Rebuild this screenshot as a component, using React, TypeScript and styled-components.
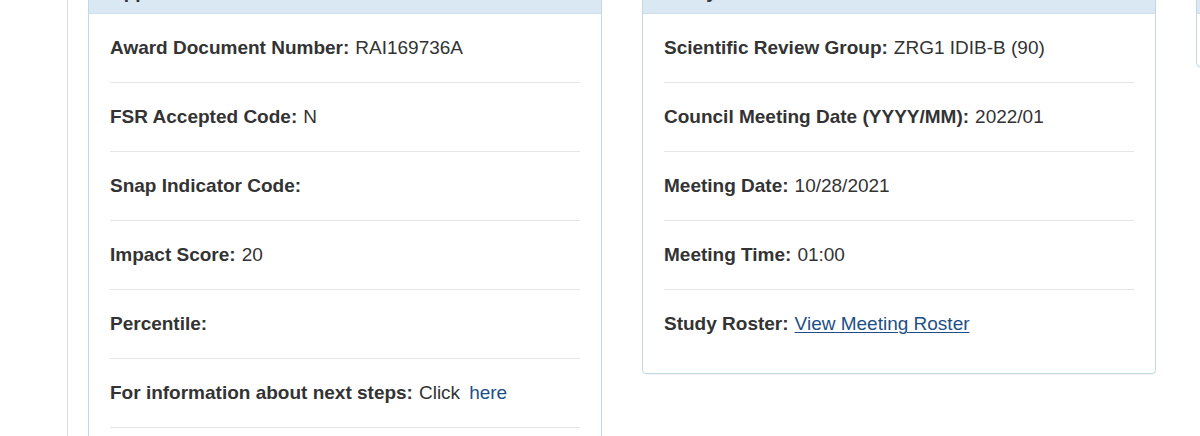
import React from "react";
import styled, { createGlobalStyle } from "styled-components";

const Global = createGlobalStyle`
  html, body { margin: 0; padding: 0; overflow: hidden; background: #fff; }
  body { font-family: "Liberation Sans", Arial, Helvetica, sans-serif; color: #333; }
`;

const Page = styled.div`
  margin-top: -30px;
  margin-left: 67px;
  border-left: 1px solid #dcdcdc;
  padding-left: 20px;
  min-height: 520px;
  display: flex;
  align-items: flex-start;
  gap: 40px;
`;

const Panel = styled.section<{ $tall?: boolean }>`
  flex: 0 0 514px;
  box-sizing: border-box;
  border: 1px solid #c3d8e5;
  border-radius: 4px;
  background: #fff;
  box-shadow: 0 1px 1px rgba(0, 0, 0, 0.04);
  padding-bottom: ${(p) => (p.$tall ? "40px" : "0")};
`;

const Header = styled.div`
  box-sizing: border-box;
  height: 43px;
  padding: 11px 21px 0;
  background: #d9e8f2;
  border-bottom: 1px solid #cfe0ea;
  font-size: 19px;
  line-height: 20px;
  font-weight: bold;
  color: #333;
  white-space: nowrap;
  overflow: hidden;
`;

const Body = styled.div<{ $pb?: number; $h?: number }>`
  padding: 0 21px ${(p) => p.$pb ?? 0}px;
  ${(p) => (p.$h ? `height: ${p.$h}px;` : "")}
`;

const Row = styled.div<{ $last?: boolean }>`
  height: 68px;
  display: flex;
  align-items: center;
  font-size: 19px;
  line-height: 22px;
  border-bottom: ${(p) => (p.$last ? "none" : "1px solid #e6e6e6")};
  white-space: nowrap;
`;

const Label = styled.strong`
  font-weight: bold;
  color: #333;
  margin-right: 6px;
`;

const Value = styled.span`
  color: #333;
`;

const Link = styled.a<{ $underline?: boolean }>`
  color: #1d4f86;
  text-decoration: ${(p) => (p.$underline ? "underline" : "none")};
  text-underline-offset: 2px;
  text-decoration-thickness: 1px;
  margin-left: ${(p) => (p.$underline ? "0" : "9px")};
`;

export default function App() {
  return (
    <>
      <Global />
      <Page>
        <Panel $tall>
          <Header>Application Information</Header>
          <Body>
            <Row>
              <Label>Award Document Number:</Label>
              <Value>RAI169736A</Value>
            </Row>
            <Row>
              <Label>FSR Accepted Code:</Label>
              <Value>N</Value>
            </Row>
            <Row>
              <Label>Snap Indicator Code:</Label>
            </Row>
            <Row>
              <Label>Impact Score:</Label>
              <Value>20</Value>
            </Row>
            <Row>
              <Label>Percentile:</Label>
            </Row>
            <Row>
              <Label>For information about next steps:</Label>
              <Value>Click</Value>
              <Link href="#">here</Link>
            </Row>
          </Body>
        </Panel>
        <Panel>
          <Header>Study Section Information</Header>
          <Body $pb={15}>
            <Row>
              <Label>Scientific Review Group:</Label>
              <Value>ZRG1 IDIB-B (90)</Value>
            </Row>
            <Row>
              <Label>Council Meeting Date (YYYY/MM):</Label>
              <Value>2022/01</Value>
            </Row>
            <Row>
              <Label>Meeting Date:</Label>
              <Value>10/28/2021</Value>
            </Row>
            <Row>
              <Label>Meeting Time:</Label>
              <Value>01:00</Value>
            </Row>
            <Row $last>
              <Label>Study Roster:</Label>
              <Link href="#" $underline>
                View Meeting Roster
              </Link>
            </Row>
          </Body>
        </Panel>
        <Panel>
          <Header />
          <Body $h={52} />
        </Panel>
      </Page>
    </>
  );
}
